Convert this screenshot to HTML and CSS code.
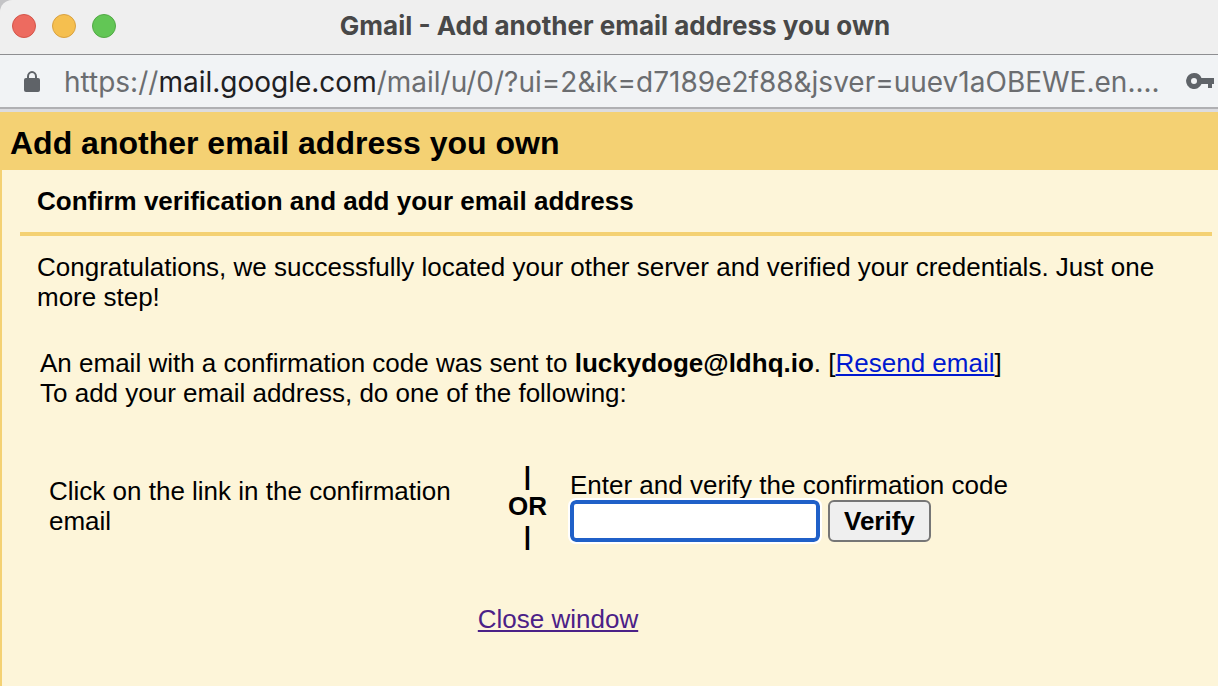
FILE: index.html
```html
<!DOCTYPE html>
<html lang="en">
<head>
<meta charset="utf-8">
<title>Gmail - Add another email address you own</title>
<link rel="stylesheet" href="styles.css">
</head>
<body>
<div class="window">
  <header class="titlebar">
    <div class="lights">
      <button class="light close" aria-label="Close"></button>
      <button class="light minimize" aria-label="Minimize"></button>
      <button class="light zoom" aria-label="Zoom"></button>
    </div>
    <div class="window-title">Gmail - Add another email address you own</div>
  </header>
  <div class="addressbar">
    <svg class="lock" viewBox="0 0 16 21" aria-hidden="true"><path d="M4 8V5.500a4 4.500 0 0 1 8 0V8" fill="none" stroke="#5f6368" stroke-width="2"/><rect y="7" width="16" height="14" rx="2" fill="#5f6368"/></svg>
    <div class="url">https://<span class="host">mail.google.com</span>/mail/u/0/?ui=2&amp;ik=d7189e2f88&amp;jsver=uuev1aOBEWE.en....</div>
    <svg class="key" viewBox="0 0 28 16" aria-hidden="true"><path fill-rule="evenodd" fill="#5f6368" d="M8 0a8 8 0 0 1 7.500 5H28v6h-2v4h-4v-4h-6.500A8 8 0 1 1 8 0zM8 5a3 3 0 1 0 0 6 3 3 0 0 0 0-6z"/></svg>
  </div>
  <main class="page">
    <h1 class="page-title">Add another email address you own</h1>
    <div class="panel">
      <h2 class="step-title">Confirm verification and add your email address</h2>
      <p class="intro">Congratulations, we successfully located your other server and verified your credentials. Just one more step!</p>
      <p class="sent">An email with a confirmation code was sent to <b>luckydoge@ldhq.io</b>. [<a class="resend" href="#">Resend email</a>]<br>To add your email address, do one of the following:</p>
      <div class="options">
        <p class="option-link">Click on the link in the confirmation email</p>
        <div class="or"><span>|</span><span>OR</span><span>|</span></div>
        <form class="verify">
          <label for="code">Enter and verify the confirmation code</label>
          <div class="controls">
            <input class="code" id="code" type="text">
            <button class="submit" type="button">Verify</button>
          </div>
        </form>
      </div>
      <p class="footer"><a class="dismiss" href="#">Close window</a></p>
    </div>
  </main>
</div>
</body>
</html>
```
FILE: styles.css
```css
* { box-sizing: border-box; }
body {
  margin: 0;
  background: #fdf5d9;
  color: #000;
  font: 26px/30px "Liberation Sans", Arial, sans-serif;
}
h1, h2, p { margin: 0; }
.window { display: flex; flex-direction: column; min-height: 100vh; background: #c4c4c6; }
.titlebar {
  display: grid;
  grid-template-columns: 140px 1fr 128px;
  align-items: center;
  height: 55px;
  padding-bottom: 3px;
  background: #efefef;
  border-bottom: 1px solid #8e8e91;
  border-top-left-radius: 12px;
}
.lights { display: flex; gap: 16px; padding-left: 12px; }
.light { width: 24px; height: 24px; padding: 0; border-radius: 50%; }
.close { background: #ed6b60; border: 1px solid #d4554a; }
.minimize { background: #f5bf4f; border: 1px solid #d9a140; }
.zoom { background: #62c655; border: 1px solid #52a945; }
.window-title {
  color: #484848;
  font: bold 26px/30px Inter, sans-serif;
  text-align: center;
  white-space: nowrap;
}
.addressbar {
  display: flex;
  align-items: center;
  height: 54px;
  padding: 0 4px 0 24px;
  background: #f1f3f5;
  border-bottom: 2px solid #b0b0b3;
}
.lock { width: 16px; height: 21px; margin-right: 24px; }
.url {
  flex: 1;
  padding-top: 2px;
  color: #6b6d70;
  font: 28px/32px Inter, sans-serif;
  white-space: nowrap;
}
.host { color: #1f2023; }
.key { width: 28px; height: 16px; }
.page {
  flex: 1;
  display: flex;
  flex-direction: column;
  background: #f4d173;
  border-top: 3px solid #dcdcdf;
}
.page-title { padding: 13px 10px 9px; font-size: 32px; line-height: 36px; }
.panel {
  flex: 1;
  margin-left: 2px;
  padding: 0 6px 24px 18px;
  background: #fdf5d9;
}
.step-title {
  padding: 16px 17px;
  border-bottom: 4px solid #f4d173;
  font-size: 26px;
  line-height: 30px;
}
.intro { padding: 16px 17px 0; }
.sent { padding: 36px 20px 0; }
.options {
  display: grid;
  grid-template-columns: 436px 85px 1fr;
  align-items: center;
  margin-top: 53px;
  padding-left: 29px;
}
.or { display: flex; flex-direction: column; align-items: center; font-weight: bold; }
.verify { display: flex; flex-direction: column; }
.controls { display: flex; gap: 8px; }
.code {
  width: 250px;
  height: 42px;
  padding: 4px 8px;
  border: 4px solid #2060c8;
  border-radius: 6px;
  outline: 2px solid #fff;
  background: #fff;
  font: inherit;
}
.submit {
  height: 42px;
  padding: 0 14px;
  border: 2px solid #767676;
  border-radius: 6px;
  background: #efefef;
  color: #000;
  font: bold 26px/30px "Liberation Sans", Arial, sans-serif;
}
.footer { padding: 53px 116px 0 0; text-align: center; }
.resend { color: #0019d0; }
.dismiss { color: #4b2187; }
```
